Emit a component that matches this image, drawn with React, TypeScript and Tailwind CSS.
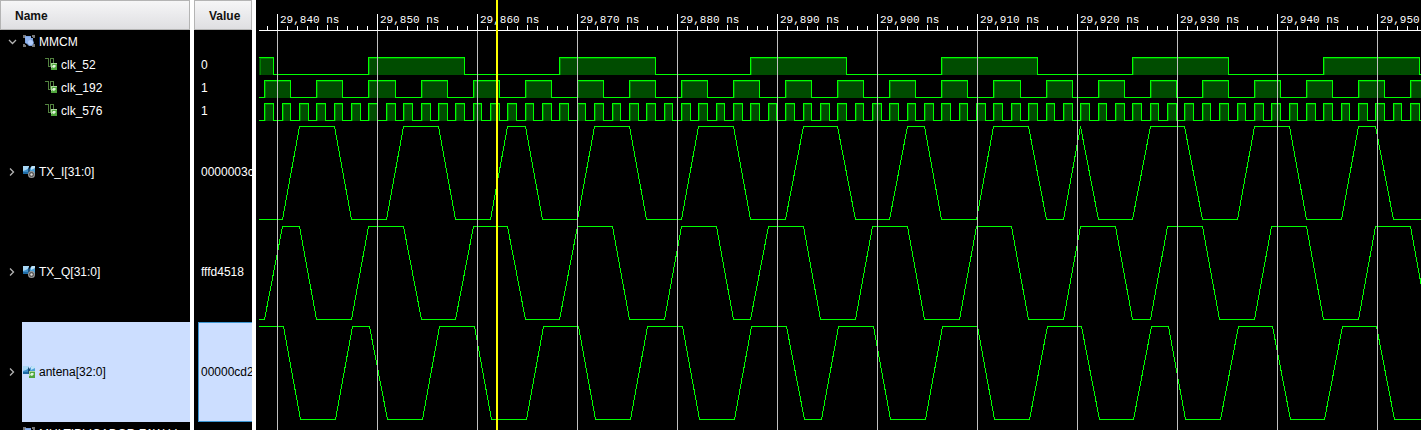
import { useState } from "react";

type RowKind = "group" | "clock" | "bus" | "virtual";

interface Row {
  name: string;
  value: string;
  kind: RowKind;
  selected?: boolean;
}

const rows: Row[] = [
  { name: "MMCM", value: "", kind: "group" },
  { name: "clk_52", value: "0", kind: "clock" },
  { name: "clk_192", value: "1", kind: "clock" },
  { name: "clk_576", value: "1", kind: "clock" },
  { name: "TX_I[31:0]", value: "0000003c", kind: "bus" },
  { name: "TX_Q[31:0]", value: "fffd4518", kind: "bus" },
  { name: "antena[32:0]", value: "00000cd2c", kind: "virtual", selected: true },
  { name: "MULTIPLICADOR FAW LI", value: "", kind: "group" },
];

// Edges of the fastest clock; the slower clocks toggle on every 3rd and 11th.
const fastEdges = [
  264, 273, 282, 290, 299, 308, 316, 325, 334, 342, 351, 360, 368, 377, 386, 395, 403, 412, 421,
  430, 438, 447, 455, 464, 473, 481, 490, 499, 507, 516, 525, 533, 542, 551, 559, 568, 577, 585,
  594, 603, 612, 620, 629, 638, 646, 655, 664, 672, 681, 690, 698, 707, 716, 724, 733, 742, 750,
  759, 768, 776, 785, 794, 803, 811, 820, 829, 837, 846, 855, 863, 872, 881, 889, 898, 907, 915,
  924, 933, 941, 950, 959, 967, 976, 985, 993, 1002, 1011, 1020, 1028, 1037, 1046, 1054, 1063,
  1072, 1080, 1089, 1098, 1106, 1115, 1124, 1132, 1141, 1150, 1158, 1167, 1176, 1184, 1193, 1202,
  1210, 1219, 1228, 1237, 1245, 1254, 1263, 1271, 1280, 1289, 1297, 1306, 1315, 1323, 1332, 1341,
  1349, 1358, 1367, 1375, 1384, 1393, 1401, 1410, 1419, 1427,
];

const clocks = [
  { high: 57, startsHigh: true, edges: fastEdges.filter((_, i) => i % 11 === 1) },
  { high: 80, startsHigh: false, edges: fastEdges.filter((_, i) => i % 3 === 0) },
  { high: 103, startsHigh: false, edges: fastEdges },
];

const analog = [
  {
    high: 126,
    startsHigh: false,
    points: [
      282, 299, 334, 351, 386, 403, 438, 455, 490, 507, 525, 542, 577, 594, 629, 646, 681, 698, 733,
      750, 785, 803, 837, 855, 889, 907, 924, 941, 976, 993, 1028, 1046, 1063, 1080, 1080, 1098,
      1132, 1150, 1184, 1202, 1237, 1254, 1289, 1306, 1341, 1358, 1375, 1393, 1427,
    ],
  },
  {
    high: 226,
    startsHigh: false,
    points: [
      264, 282, 299, 316, 351, 368, 403, 421, 455, 473, 507, 525, 559, 577, 612, 629, 664, 681, 716,
      733, 750, 768, 803, 820, 855, 872, 907, 924, 959, 976, 1011, 1028, 1063, 1080, 1115, 1132,
      1150, 1167, 1202, 1219, 1254, 1271, 1306, 1323, 1358, 1375, 1410, 1427,
    ],
  },
  {
    high: 326,
    startsHigh: true,
    points: [
      283, 300, 335, 352, 369, 387, 422, 439, 474, 491, 526, 543, 578, 595, 630, 647, 682, 699, 734,
      751, 786, 804, 821, 838, 873, 890, 925, 942, 977, 994, 1029, 1047, 1081, 1099, 1133, 1151,
      1168, 1185, 1220, 1238, 1272, 1290, 1324, 1342, 1376, 1394, 1428,
    ],
  },
];

const ORIGIN = 256;
const START = 259;
const END = 1427;
const toX = (x: number) => x - ORIGIN + 0.5;

function DigitalWave({ high, startsHigh, edges }: (typeof clocks)[number]) {
  const top = high + 0.5;
  const bottom = high + 17.5;
  let level = startsHigh;
  let line = `M${START - ORIGIN} ${level ? top : bottom}`;
  const pulses: [number, number][] = [];
  let rise = START;
  for (const edge of edges) {
    line += `H${toX(edge)}V${level ? bottom : top}`;
    if (level) pulses.push([rise, edge]);
    else rise = edge;
    level = !level;
  }
  if (level) pulses.push([rise, END]);
  line += `H${END - ORIGIN}`;
  return (
    <g>
      {pulses.map(([a, b]) => (
        <g key={a}>
          <rect x={a - ORIGIN} y={high} width={b - a} height={18} fill="#004c00" />
          <path d={`M${toX(a) + 1} ${bottom}V${top + 1}H${toX(b)}`} fill="none" stroke="#008000" />
        </g>
      ))}
      <path d={line} fill="none" stroke="#00ff00" strokeLinecap="square" />
    </g>
  );
}

function AnalogWave({ high, startsHigh, points }: (typeof analog)[number]) {
  const top = high + 0.5;
  const bottom = high + 93.5;
  const startY = startsHigh ? top : bottom;
  const otherY = startsHigh ? bottom : top;
  const d = points
    .map((x, i) => `L${toX(x)} ${Math.floor((i + 1) / 2) % 2 === 0 ? startY : otherY}`)
    .join("");
  return <path d={`M${START - ORIGIN} ${startY}${d}`} fill="none" stroke="#00ff00" />;
}

function Waveforms() {
  const majors = Array.from({ length: 12 }, (_, i) => i);
  const ticks = Array.from({ length: 117 }, (_, i) => i);
  return (
    <svg
      className="block h-full w-full"
      role="img"
      aria-label="Waveforms"
      shapeRendering="crispEdges"
    >
      {clocks.map((c) => (
        <DigitalWave key={c.high} {...c} />
      ))}
      {analog.map((a) => (
        <AnalogWave key={a.high} {...a} />
      ))}
      {majors.map((i) => (
        <rect key={i} x={21 + i * 100} y={31} width={1} height="100%" fill="#c0c0c0" />
      ))}
      <rect x={3} y={30} width="100%" height={1} fill="#ffffff" />
      {ticks.map((i) => {
        const y = i % 10 === 1 ? 14 : i % 10 === 6 ? 25 : 26;
        return <rect key={i} x={11 + i * 10} y={y} width={1} height={30 - y} fill="#ffffff" />;
      })}
      {majors.map((i) => (
        <text
          key={i}
          x={24 + i * 100}
          y={23}
          fill="#ffffff"
          className="font-['Liberation_Mono',monospace] text-[11px]"
        >
          {`29,${840 + i * 10} ns`}
        </text>
      ))}
      <rect x={240} y={0} width={2} height="100%" fill="#ffff00" />
    </svg>
  );
}

function GroupIcon() {
  return (
    <svg width="12" height="13" viewBox="0 0 12 13" className="shrink-0" aria-hidden="true">
      <path
        d="M0 0h3v2H2v1H0zM9 0h3v3h-2V2H9zM0 9h2v1h1v2H0zM10 9h2v3H9v-2h1z"
        fill="#777777"
      />
      <path d="M2 1h6v2h2v2l1 3-2 3H6L4 9 2 8z" fill="#7ba1de" />
      <path d="M2 2h6v6H3z" fill="#8fb3ee" />
      <circle cx="7.500" cy="7.500" r="2.500" fill="#b3cdfa" />
    </svg>
  );
}

function SignalBadge() {
  return (
    <>
      <path d="M6 5h6v7H6z" fill="#4fa63c" />
      <path d="M6 5h6v1H7v4H6z" fill="#a9d69b" />
      <path d="M7 9l1-2h2l1 1-2 2z" fill="#e2f3dc" />
    </>
  );
}

function ClockIcon() {
  return (
    <svg width="12" height="13" viewBox="0 0 12 13" className="shrink-0" aria-hidden="true">
      <path
        d="M0 .5H3.500V8.500H5.500V.5H8.500V5"
        fill="none"
        stroke="#52823f"
        shapeRendering="crispEdges"
      />
      <SignalBadge />
    </svg>
  );
}

function BusIcon({ virtual = false }: { virtual?: boolean }) {
  return (
    <svg width="12" height="12" viewBox="0 0 12 12" className="shrink-0" aria-hidden="true">
      <path d="M0 0h6v8H0z" fill="#3f8fcb" />
      <path d="M0 0h6v2L3 4 0 5z" fill="#a9d8f5" />
      <path d="M0 6h6v2H0z" fill="#1d6aa3" />
      <path d="M7 2l2-2h3v8H7z" fill="#4b9fd6" />
      <path d="M8 1l1-1h3v2L8 4z" fill="#bfe3f8" />
      <path d="M5 1l2 2v3L5 8z" fill="#1b4f78" />
      {virtual ? (
        <SignalBadge />
      ) : (
        <>
          <circle cx="8.500" cy="8.500" r="3.500" fill="#969696" />
          <circle cx="8.500" cy="8.500" r="2" fill="none" stroke="#4a4a4a" />
          <circle cx="8.500" cy="8.500" r="1" fill="#d8d8d8" />
        </>
      )}
    </svg>
  );
}

function RowIcon({ kind }: { kind: RowKind }) {
  if (kind === "group") return <GroupIcon />;
  if (kind === "clock") return <ClockIcon />;
  return <BusIcon virtual={kind === "virtual"} />;
}

function HeaderCell({ label }: { label: string }) {
  return (
    <th scope="col" className="h-[30px] border-r-4 border-white p-0 text-left">
      <div className="flex h-[30px] items-center border border-[#b4b4b4] bg-linear-to-b from-[#f6f6f7] to-[#dfdfe2] pl-3.5 pt-0.5 font-bold text-[#111111]">
        {label}
      </div>
    </th>
  );
}

export default function App() {
  const [selected, setSelected] = useState(rows.findIndex((r) => r.selected));
  return (
    <main className="flex h-screen overflow-hidden bg-black font-['Liberation_Sans',Arial,sans-serif] text-[12px] leading-4 text-white">
      <div className="w-64 shrink-0 overflow-hidden">
        <table className="w-64 table-fixed border-separate border-spacing-0">
          <colgroup>
            <col className="w-[194px]" />
            <col />
          </colgroup>
          <thead>
            <tr>
              <HeaderCell label="Name" />
              <HeaderCell label="Value" />
            </tr>
          </thead>
          <tbody>
            {rows.map((row, i) => {
              const tall = row.kind === "bus" || row.kind === "virtual";
              const height = tall ? "h-25" : "h-[23px]";
              const active = i === selected;
              return (
                <tr key={row.name} onClick={() => setSelected(i)}>
                  <td className="border-r-4 border-white p-0">
                    <div className={`flex ${height}`}>
                      <div className="flex w-[22px] shrink-0 items-center pl-[7px]">
                        {row.kind !== "clock" && (
                          <button
                            type="button"
                            aria-label={`Toggle ${row.name}`}
                            className="flex size-[10px] items-center justify-center text-[#b4b4b4]"
                          >
                            <svg
                              width="10"
                              height="10"
                              viewBox="0 0 10 10"
                              fill="none"
                              stroke="currentColor"
                              strokeWidth="1.300"
                              aria-hidden="true"
                            >
                              <path
                                d={i === 0 ? "M2 3l3.500 3.500L9 3" : "M3 1.500L6.500 5 3 8.500"}
                              />
                            </svg>
                          </button>
                        )}
                      </div>
                      <div
                        className={`flex min-w-0 flex-1 items-center gap-1 whitespace-nowrap ${
                          row.kind === "clock" ? "pl-[23px]" : "pl-px"
                        } ${active ? "bg-[#ccdeff] text-black" : ""}`}
                      >
                        <RowIcon kind={row.kind} />
                        <span>{row.name}</span>
                      </div>
                    </div>
                  </td>
                  <td className="overflow-hidden border-r-4 border-white p-0 pl-1">
                    <div
                      className={`flex ${height} items-center overflow-hidden border-y border-l pl-0.5 ${
                        active ? "border-[#3c96d2] bg-[#ccdeff] text-black" : "border-transparent"
                      }`}
                    >
                      {row.value}
                    </div>
                  </td>
                </tr>
              );
            })}
          </tbody>
        </table>
      </div>
      <div className="min-w-0 flex-1 overflow-hidden">
        <Waveforms />
      </div>
    </main>
  );
}
